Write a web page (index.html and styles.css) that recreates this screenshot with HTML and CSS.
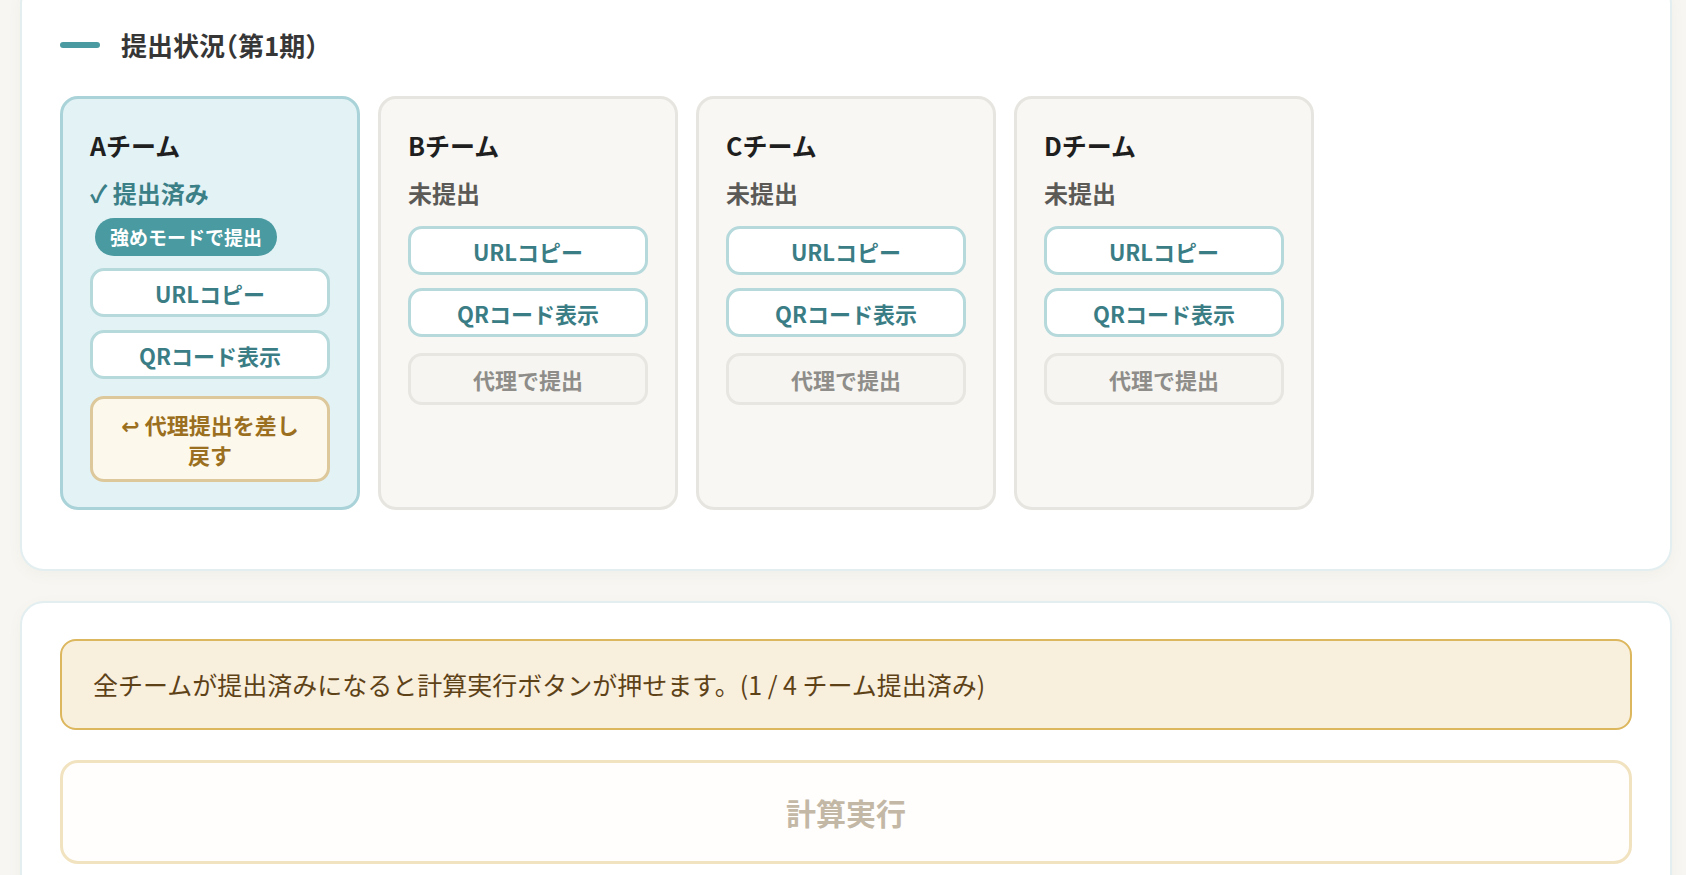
FILE: index.html
```html
<!DOCTYPE html>
<html lang="ja">
<head>
<meta charset="utf-8">
<title>提出状況</title>
<link rel="stylesheet" href="styles.css">
</head>
<body>
<main class="page">
  <section class="panel panel-status">
    <h2 class="section-title"><span class="title-bar"></span>提出状況（第1期）</h2>
    <div class="team-grid">
      <div class="team-card team-done">
        <div class="team-name">Aチーム</div>
        <div class="team-status status-done">✓ 提出済み</div>
        <span class="badge">強めモードで提出</span>
        <div class="actions">
          <button class="btn btn-primary">URLコピー</button>
          <button class="btn btn-primary">QRコード表示</button>
          <button class="btn btn-revert">↩ 代理提出を差し戻す</button>
        </div>
      </div>
      <div class="team-card">
        <div class="team-name">Bチーム</div>
        <div class="team-status status-pending">未提出</div>
        <div class="actions">
          <button class="btn btn-primary">URLコピー</button>
          <button class="btn btn-primary">QRコード表示</button>
          <button class="btn btn-proxy">代理で提出</button>
        </div>
      </div>
      <div class="team-card">
        <div class="team-name">Cチーム</div>
        <div class="team-status status-pending">未提出</div>
        <div class="actions">
          <button class="btn btn-primary">URLコピー</button>
          <button class="btn btn-primary">QRコード表示</button>
          <button class="btn btn-proxy">代理で提出</button>
        </div>
      </div>
      <div class="team-card">
        <div class="team-name">Dチーム</div>
        <div class="team-status status-pending">未提出</div>
        <div class="actions">
          <button class="btn btn-primary">URLコピー</button>
          <button class="btn btn-primary">QRコード表示</button>
          <button class="btn btn-proxy">代理で提出</button>
        </div>
      </div>
    </div>
  </section>

  <section class="panel panel-run">
    <div class="notice">全チームが提出済みになると計算実行ボタンが押せます。(1 / 4 チーム提出済み)</div>
    <button class="run-btn" disabled>計算実行</button>
  </section>
</main>
</body>
</html>
```

FILE: styles.css
```css
* {
  box-sizing: border-box;
}

html, body {
  margin: 0;
  padding: 0;
}

body {
  background: #f7f6f2;
  font-family: "Noto Sans CJK JP", "Noto Sans", "DejaVu Sans", sans-serif;
  color: #333;
  overflow: hidden;
}

.page {
  margin-top: -20px;
  padding: 0 14px 0 20px;
  display: flex;
  flex-direction: column;
  gap: 30px;
}

.panel {
  background: #ffffff;
  border: 2px solid #e3eef0;
  border-radius: 24px;
  box-shadow: 0 4px 14px rgba(120, 110, 80, 0.05);
}

.panel-status {
  padding: 45px 38px 59px;
}

.section-title {
  margin: 0 0 33px;
  display: flex;
  align-items: center;
  font-size: 26px;
  line-height: 36px;
  font-weight: 700;
  color: #363636;
  font-feature-settings: "halt";
}

.title-bar {
  display: inline-block;
  width: 40px;
  height: 6px;
  border-radius: 3px;
  background: #4a9aa1;
  margin-right: 21px;
}

.team-grid {
  display: grid;
  grid-template-columns: repeat(4, 300px);
  gap: 18px;
}

.team-card {
  display: flex;
  flex-direction: column;
  align-items: stretch;
  border: 3px solid #e7e5df;
  background: #f8f7f3;
  border-radius: 18px;
  padding: 30px 27px 25px;
}

.team-done {
  background: #e3f2f5;
  border-color: #a9d3d8;
}

.team-name {
  font-size: 25px;
  line-height: 32px;
  font-weight: 700;
  color: #1f1f1f;
  margin-bottom: 16px;
}

.team-status {
  font-size: 24px;
  line-height: 32px;
  font-weight: 700;
}

.status-done {
  color: #3b7f87;
  margin-bottom: 9px;
}

.status-pending {
  color: #5b5a57;
  margin-bottom: 17px;
}

.badge {
  align-self: flex-start;
  margin-left: 5px;
  margin-bottom: 12px;
  height: 38px;
  line-height: 38px;
  padding: 0 15px;
  border-radius: 19px;
  background: #4a9aa1;
  color: #ffffff;
  font-size: 19px;
  font-weight: 700;
}

.actions {
  display: flex;
  flex-direction: column;
  gap: 13px;
}

.btn {
  display: block;
  width: 100%;
  font-family: inherit;
  font-size: 22px;
  font-weight: 700;
  line-height: 30px;
  border-radius: 14px;
  border: 3px solid #b6d9dc;
  background: #ffffff;
  cursor: pointer;
  text-align: center;
}

.btn-primary {
  height: 49px;
  padding: 0 8px;
  color: #3a7d85;
}

.btn-revert {
  margin-top: 4px;
  padding: 10px 20px;
  background: #fdf8ec;
  border-color: #dcc89b;
  color: #9b6f20;
}

.btn-proxy {
  margin-top: 3px;
  height: 52px;
  padding: 0 8px;
  background: #f6f5f1;
  border-color: #e8e6e1;
  color: #8e8d89;
}

.panel-run {
  padding: 36px 38px 40px;
  display: flex;
  flex-direction: column;
  gap: 30px;
}

.notice {
  border: 2px solid #dcb75e;
  background: #f8efdd;
  border-radius: 16px;
  padding: 24px 31px;
  font-size: 25px;
  line-height: 39px;
  color: #5e4217;
}

.run-btn {
  width: 100%;
  height: 104px;
  border: 3px solid #f2e3c0;
  border-radius: 18px;
  background: #fffefc;
  font-family: inherit;
  font-size: 30px;
  font-weight: 700;
  color: #c3b7a5;
}
```
